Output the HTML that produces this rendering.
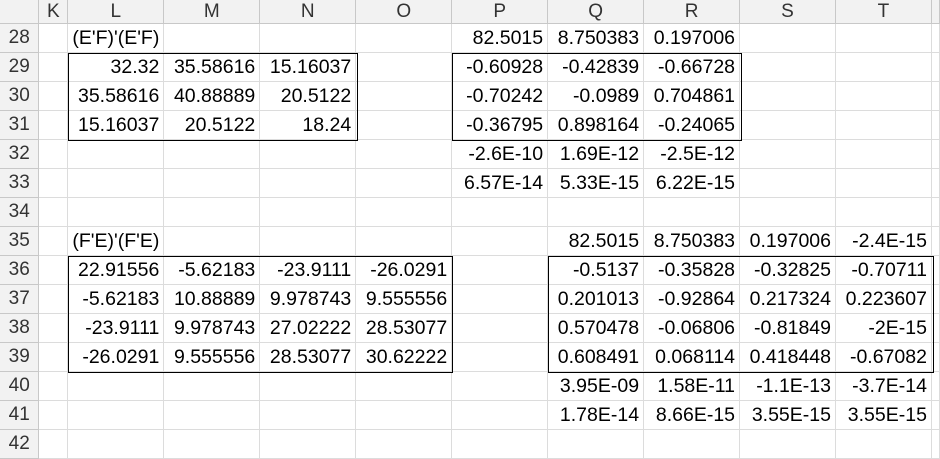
<!DOCTYPE html><html><head><style>
body{margin:0;width:940px;height:436px;overflow:hidden;background:#fff;font-family:"Liberation Sans",Arial,sans-serif;position:relative}
table{border-collapse:collapse;table-layout:fixed;position:absolute;left:0;top:0}
td{height:28px;padding:0 4px 0 0;border-right:1px solid #dcdcdc;border-bottom:1px solid #dcdcdc;font-size:19.5px;text-align:right;white-space:nowrap;overflow:visible;color:#000;line-height:28px}
tr.h td{height:23px;line-height:23px;background:#f2f2f2;text-align:center;color:#333;padding:0;border-color:#c8c8c8;font-size:19px}
td.r{background:#f2f2f2;text-align:center;color:#333;padding:0;border-color:#c8c8c8;font-size:19px}
td.l{text-align:left;padding-left:4px}
.b{position:absolute;border:1.5px solid #000;box-sizing:border-box}
</style></head><body>
<table>
<colgroup><col style="width:39px"><col style="width:29px"><col style="width:96px"><col style="width:96px"><col style="width:96px"><col style="width:96px"><col style="width:96px"><col style="width:96px"><col style="width:96px"><col style="width:96px"><col style="width:96px"><col style="width:8px"></colgroup>
<tr class="h"><td></td><td>K</td><td>L</td><td>M</td><td>N</td><td>O</td><td>P</td><td>Q</td><td>R</td><td>S</td><td>T</td><td></td></tr>
<tr><td class="r">28</td><td></td><td class="l">(E'F)'(E'F)</td><td></td><td></td><td></td><td>82.5015</td><td>8.750383</td><td>0.197006</td><td></td><td></td><td></td></tr>
<tr><td class="r">29</td><td></td><td>32.32</td><td>35.58616</td><td>15.16037</td><td></td><td>-0.60928</td><td>-0.42839</td><td>-0.66728</td><td></td><td></td><td></td></tr>
<tr><td class="r">30</td><td></td><td>35.58616</td><td>40.88889</td><td>20.5122</td><td></td><td>-0.70242</td><td>-0.0989</td><td>0.704861</td><td></td><td></td><td></td></tr>
<tr><td class="r">31</td><td></td><td>15.16037</td><td>20.5122</td><td>18.24</td><td></td><td>-0.36795</td><td>0.898164</td><td>-0.24065</td><td></td><td></td><td></td></tr>
<tr><td class="r">32</td><td></td><td></td><td></td><td></td><td></td><td>-2.6E-10</td><td>1.69E-12</td><td>-2.5E-12</td><td></td><td></td><td></td></tr>
<tr><td class="r">33</td><td></td><td></td><td></td><td></td><td></td><td>6.57E-14</td><td>5.33E-15</td><td>6.22E-15</td><td></td><td></td><td></td></tr>
<tr><td class="r">34</td><td></td><td></td><td></td><td></td><td></td><td></td><td></td><td></td><td></td><td></td><td></td></tr>
<tr><td class="r">35</td><td></td><td class="l">(F'E)'(F'E)</td><td></td><td></td><td></td><td></td><td>82.5015</td><td>8.750383</td><td>0.197006</td><td>-2.4E-15</td><td></td></tr>
<tr><td class="r">36</td><td></td><td>22.91556</td><td>-5.62183</td><td>-23.9111</td><td>-26.0291</td><td></td><td>-0.5137</td><td>-0.35828</td><td>-0.32825</td><td>-0.70711</td><td></td></tr>
<tr><td class="r">37</td><td></td><td>-5.62183</td><td>10.88889</td><td>9.978743</td><td>9.555556</td><td></td><td>0.201013</td><td>-0.92864</td><td>0.217324</td><td>0.223607</td><td></td></tr>
<tr><td class="r">38</td><td></td><td>-23.9111</td><td>9.978743</td><td>27.02222</td><td>28.53077</td><td></td><td>0.570478</td><td>-0.06806</td><td>-0.81849</td><td>-2E-15</td><td></td></tr>
<tr><td class="r">39</td><td></td><td>-26.0291</td><td>9.555556</td><td>28.53077</td><td>30.62222</td><td></td><td>0.608491</td><td>0.068114</td><td>0.418448</td><td>-0.67082</td><td></td></tr>
<tr><td class="r">40</td><td></td><td></td><td></td><td></td><td></td><td></td><td>3.95E-09</td><td>1.58E-11</td><td>-1.1E-13</td><td>-3.7E-14</td><td></td></tr>
<tr><td class="r">41</td><td></td><td></td><td></td><td></td><td></td><td></td><td>1.78E-14</td><td>8.66E-15</td><td>3.55E-15</td><td>3.55E-15</td><td></td></tr>
<tr><td class="r">42</td><td></td><td></td><td></td><td></td><td></td><td></td><td></td><td></td><td></td><td></td><td></td></tr>
</table>
<div class="b" style="left:68px;top:53px;width:290px;height:88px"></div>
<div class="b" style="left:452px;top:53px;width:290px;height:88px"></div>
<div class="b" style="left:68px;top:256px;width:385px;height:117px"></div>
<div class="b" style="left:548px;top:256px;width:386px;height:117px"></div>
</body></html>
